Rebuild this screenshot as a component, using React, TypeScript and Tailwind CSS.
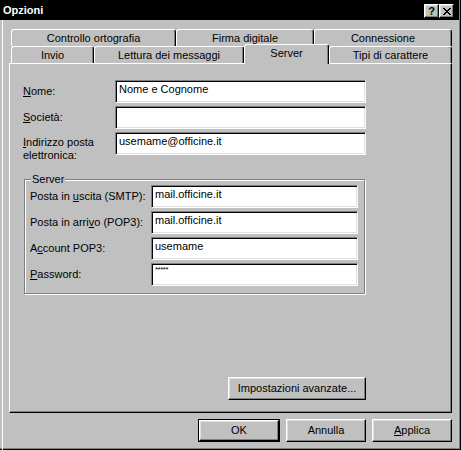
import React from 'react';

// Win95 bevels
const raised =
  'border border-t-white border-l-white border-r-black border-b-black shadow-[inset_-1px_-1px_0_#808080,inset_1px_1px_0_#dfdfdf]';
const sunken =
  'border border-t-[#808080] border-l-[#808080] border-r-white border-b-white shadow-[inset_1px_1px_0_#000,inset_-1px_-1px_0_#dfdfdf]';

const Field = ({ value = '', w, small }: { value?: string; w: string; small?: boolean }) => (
  <div
    className={`${sunken} ${w} h-[23px] bg-white pl-[3px] whitespace-nowrap ${
      small ? 'pt-px text-[8px] leading-[9px] tracking-[-0.5px]' : 'pt-[2px] leading-[13px]'
    }`}
  >
    {value}
  </div>
);

const Label = ({ children }: { children: React.ReactNode }) => (
  <div className="flex h-[23px] items-center whitespace-nowrap">{children}</div>
);

const Tab = ({ w, children }: { w: string; children: React.ReactNode }) => (
  <div
    className={`${w} flex h-full justify-center rounded-t-[3px] border-t border-l border-r border-t-white border-l-white border-r-black pt-[2px] leading-[13px] shadow-[inset_-1px_0_0_#808080]`}
  >
    {children}
  </div>
);

const Button = ({ w, children }: { w: string; children: React.ReactNode }) => (
  <div className={`${raised} ${w} flex h-[23px] items-center justify-center leading-[13px]`}>{children}</div>
);

export default function App() {
  return (
    <div className="flex h-[450px] w-[461px] flex-col bg-[#c0c0c0] font-['Liberation_Sans',Arial,sans-serif] text-[11px] text-black shadow-[inset_-1px_-1px_0_#000,inset_-2px_-2px_0_#808080]">
      {/* Title bar */}
      <div className="mr-[2px] flex h-[20px] shrink-0 items-start justify-between bg-black pr-[5px] pt-[4px]">
        <span className="pl-[3px] text-[11px] font-bold leading-[13px] text-white">Opzioni</span>
        <div className="flex">
          <div className={`${raised} flex h-[14px] w-[15px] items-center justify-center bg-[#c0c0c0] text-[11px] font-bold leading-[11px]`}>
            ?
          </div>
          <div className={`${raised} flex h-[14px] w-[15px] items-center justify-center bg-[#c0c0c0]`}>
            <svg width="8" height="7" viewBox="0 0 8 7" shapeRendering="crispEdges">
              <path
                d="M0 0h2v1h1v1h2v-1h1v-1h2v1h-1v1h-1v1h-1v1h1v1h1v1h1v1h-2v-1h-1v-1h-2v1h-1v1h-2v-1h1v-1h1v-1h1v-1h-1v-1h-1v-1h-1z"
                fill="#000"
              />
            </svg>
          </div>
        </div>
      </div>

      <div className="ml-[2px] flex flex-1 flex-col border-l border-white">
        {/* Tabs, back row */}
        <div className="ml-[8px] mt-[9px] flex h-[17px] w-[441px]">
          <Tab w="w-[165px]">Controllo ortografia</Tab>
          <Tab w="w-[138px]">Firma digitale</Tab>
          <Tab w="w-[138px]">Connessione</Tab>
        </div>
        {/* Tabs, front row */}
        <div className="ml-[8px] flex h-[17px] w-[441px] items-start">
          <Tab w="w-[83px]">Invio</Tab>
          <Tab w="w-[150px]">Lettura dei messaggi</Tab>
          <div className="relative z-10 -mt-[2px] flex h-[20px] w-[85px] justify-center rounded-t-[3px] border-t border-l border-r border-t-white border-l-white border-r-black bg-[#c0c0c0] pt-[2px] leading-[13px] shadow-[inset_-1px_0_0_#808080]">
            Server
          </div>
          <Tab w="w-[123px]">Tipi di carattere</Tab>
        </div>

        {/* Panel */}
        <div className="ml-[6px] flex h-[350px] w-[443px] flex-col border border-t-white border-l-white border-r-black border-b-black pb-[12px] pl-[13px] shadow-[inset_-1px_-1px_0_#808080]">
          <div className="mt-[16px] grid grid-cols-[92px_251px] gap-y-[3px]">
            <Label>
              <span><u>N</u>ome:</span>
            </Label>
            <Field value="Nome e Cognome" w="w-[251px]" />
            <Label>
              <span><u>S</u>ocietà:</span>
            </Label>
            <Field w="w-[251px]" />
            <div className="h-[23px] pt-[4px] leading-[13px]">
              <u>I</u>ndirizzo posta
              <br />
              elettronica:
            </div>
            <Field value="usemame@officine.it" w="w-[251px]" />
          </div>

          {/* Server group */}
          <div className="relative ml-px mt-[24px] h-[115px] w-[341px] border border-[#808080] pl-[5px] pt-[5px] shadow-[inset_1px_1px_0_white,1px_1px_0_white]">
            <span className="absolute -top-[7px] left-[6px] bg-[#c0c0c0] px-[1px] leading-[13px]">Server</span>
            <div className="grid grid-cols-[121px_207px] gap-y-[3px]">
              <Label>
                <span>Posta in <u>u</u>scita (SMTP):</span>
              </Label>
              <Field value="mail.officine.it" w="w-[207px]" />
              <Label>
                <span>Posta in arri<u>v</u>o (POP3):</span>
              </Label>
              <Field value="mail.officine.it" w="w-[207px]" />
              <Label>
                <span>A<u>c</u>count POP3:</span>
              </Label>
              <Field value="usemame" w="w-[207px]" />
              <Label>
                <span><u>P</u>assword:</span>
              </Label>
              <Field value="*****" w="w-[207px]" small />
            </div>
          </div>

          <div className="mt-auto flex w-[343px] justify-end">
            <Button w="w-[138px]">Impostazioni avanzate...</Button>
          </div>
        </div>

        {/* Dialog buttons */}
        <div className="ml-[6px] mt-[6px] flex w-[443px] justify-end gap-[6px]">
          <div className="h-[23px] w-[82px] border border-black">
            <div className={`${raised} flex h-full items-center justify-center leading-[13px]`}>OK</div>
          </div>
          <Button w="w-[80px]">Annulla</Button>
          <Button w="w-[80px]">
            <span><u>A</u>pplica</span>
          </Button>
        </div>
      </div>
    </div>
  );
}
